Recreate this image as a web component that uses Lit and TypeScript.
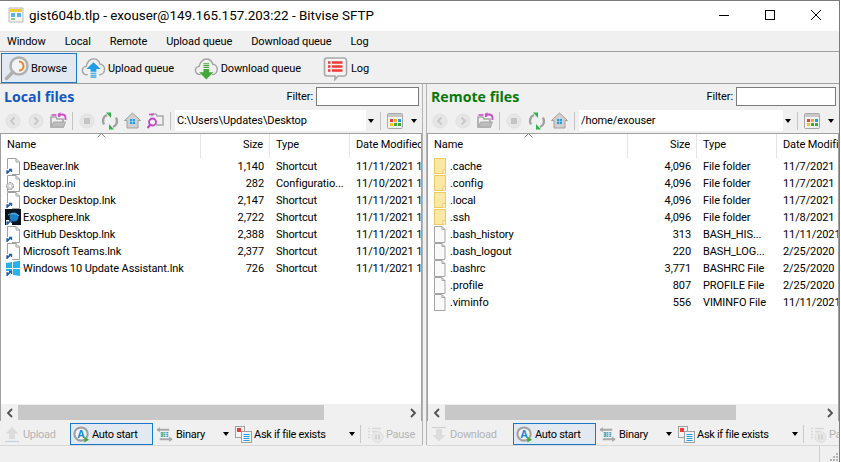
import { LitElement, css, html, svg } from 'lit';
import { customElement } from 'lit/decorators.js';

type Row = { name: string; size: string; type: string; date: string; icon: string };

const localRows: Row[] = [
  { name: 'DBeaver.lnk', size: '1,140', type: 'Shortcut', date: '11/11/2021 1', icon: 'link' },
  { name: 'desktop.ini', size: '282', type: 'Configuratio...', date: '11/10/2021 1', icon: 'ini' },
  { name: 'Docker Desktop.lnk', size: '2,147', type: 'Shortcut', date: '11/11/2021 1', icon: 'link' },
  { name: 'Exosphere.lnk', size: '2,722', type: 'Shortcut', date: '11/11/2021 1', icon: 'exo' },
  { name: 'GitHub Desktop.lnk', size: '2,388', type: 'Shortcut', date: '11/11/2021 1', icon: 'link' },
  { name: 'Microsoft Teams.lnk', size: '2,377', type: 'Shortcut', date: '11/10/2021 1', icon: 'link' },
  { name: 'Windows 10 Update Assistant.lnk', size: '726', type: 'Shortcut', date: '11/11/2021 1', icon: 'win' },
];

const remoteRows: Row[] = [
  { name: '.cache', size: '4,096', type: 'File folder', date: '11/7/2021', icon: 'folder' },
  { name: '.config', size: '4,096', type: 'File folder', date: '11/7/2021', icon: 'folder' },
  { name: '.local', size: '4,096', type: 'File folder', date: '11/7/2021', icon: 'folder' },
  { name: '.ssh', size: '4,096', type: 'File folder', date: '11/8/2021', icon: 'folder' },
  { name: '.bash_history', size: '313', type: 'BASH_HIS...', date: '11/11/2021', icon: 'file' },
  { name: '.bash_logout', size: '220', type: 'BASH_LOG...', date: '2/25/2020', icon: 'file' },
  { name: '.bashrc', size: '3,771', type: 'BASHRC File', date: '2/25/2020', icon: 'file' },
  { name: '.profile', size: '807', type: 'PROFILE File', date: '2/25/2020', icon: 'file' },
  { name: '.viminfo', size: '556', type: 'VIMINFO File', date: '11/11/2021', icon: 'file' },
];

const shortcutArrow = svg`<rect x="1" y="11" width="6" height="6" fill="#fff"/><path d="M2 16v-3h1.500M2.500 15l3-3M4 11.500h2.500V14" fill="none" stroke="#1f5fa8" stroke-width="1.300"/>`;

const pageShape = svg`<path d="M2.500 .5h8.500l3.500 3.500v12.500h-12z" fill="#fff" stroke="#a0a0a0"/><path d="M11 .5v3.500h3.500" fill="none" stroke="#a0a0a0"/>`;

function fileIcon(kind: string) {
  let body;
  if (kind === 'folder') {
    body = svg`<rect x="2.500" y=".5" width="11" height="15" fill="#fce8a6" stroke="#eecb62"/><path d="M11 15.500v-4h2.500v4" fill="#fdf2cc" stroke="#eecb62"/>`;
  } else if (kind === 'file') {
    body = svg`<path d="M2.500 .5h7.500l3 3v13h-10.500z" fill="#f9f9f9" stroke="#a4a4a4"/><path d="M10 .5v3h3" fill="none" stroke="#a4a4a4"/>`;
  } else if (kind === 'link') {
    body = svg`${pageShape}${shortcutArrow}`;
  } else if (kind === 'ini') {
    body = svg`${pageShape}<circle cx="5" cy="11" r="3.500" fill="#d4d4d4" stroke="#8e8e8e" stroke-dasharray="2 1"/><circle cx="5" cy="11" r="1.200" fill="#fff"/>`;
  } else if (kind === 'exo') {
    body = svg`<rect width="16" height="16" fill="#0d1420"/><circle cx="9" cy="8" r="4.500" fill="#1f7fc4"/><path d="M3 6c3-2 8-2 11 1" fill="none" stroke="#5cc0f0"/>${shortcutArrow}`;
  } else {
    body = svg`<path d="M1 3l6-1v6H1zM8 1.800L15 .8V8H8zM1 9h6v6l-6-1zM8 9h7v7l-7-1z" fill="#22b4ea"/>${shortcutArrow}`;
  }
  return html`<svg class="ficon" width="16" height="17" viewBox="0 0 16 17">${body}</svg>`;
}

const cloud = svg`<path d="M7 20c-3.500 0-5.500-2-5.500-4.500 0-2.500 2-4 4-4.200C6 7 9.500 3.500 13 3.500c3.500 0 6 2.300 6.800 5.500 2.700.2 4.700 2.500 4.700 5.200 0 3.200-2.300 5.800-5.500 5.800" fill="none" stroke="#a4a4a4" stroke-width="1.500"/>`;

const toolIcons = {
  browse: html`<svg width="25" height="25" viewBox="0 0 25 25"><circle cx="15" cy="10" r="8.500" fill="#f2f4f6" stroke="#b0b0b0" stroke-width="2.500"/><path d="M9 16l-6.500 6.500" stroke="#b0b0b0" stroke-width="3.500" stroke-linecap="round"/><path d="M15 5.500a4.500 4.500 0 0 1 0 9" fill="none" stroke="#f58220" stroke-width="2"/></svg>`,
  upload: html`<svg width="26" height="26" viewBox="0 0 26 26">${cloud}<path d="M13 7l7.500 7H16v3h-6v-3H5.500z" fill="#1c9fe8"/><path d="M10 18.500h6M10 20.500h6M10 22.500h6" stroke="#1c9fe8" stroke-width="1.200"/></svg>`,
  download: html`<svg width="26" height="26" viewBox="0 0 26 26">${cloud}<path d="M10 8.500h6M10 10.500h6M10 12.500h6" stroke="#44a838" stroke-width="1.200"/><path d="M10 14h6v3.500h4.500L13 25l-7.500-7.500H10z" fill="#44a838"/></svg>`,
  log: html`<svg width="25" height="25" viewBox="0 0 25 25"><path d="M4 2h17a2.500 2.500 0 0 1 2.500 2.500v13a2.500 2.500 0 0 1-2.500 2.500h-6l-3 3.500v-3.500H4a2.500 2.500 0 0 1-2.500-2.500v-13A2.500 2.500 0 0 1 4 2z" fill="#f4f4f4" stroke="#a8a8a8" stroke-width="1.600"/><path d="M9 6.500h10.500M9 10.500h10.500M9 14.500h10.500M5 6.500h2.500M5 10.500h2.500M5 14.500h2.500" stroke="#ee3b34" stroke-width="2.400"/></svg>`,
};

const navIcons = {
  back: html`<svg width="16" height="16" viewBox="0 0 16 16"><circle cx="8" cy="8" r="7" fill="#e6e6e6" stroke="#e0e0e0"/><path d="M9.500 4.500L6 8l3.500 3.500" fill="none" stroke="#c8c8c8" stroke-width="2"/></svg>`,
  forward: html`<svg width="16" height="16" viewBox="0 0 16 16"><circle cx="8" cy="8" r="7" fill="#e6e6e6" stroke="#e0e0e0"/><path d="M6.500 4.500L10 8l-3.500 3.500" fill="none" stroke="#c8c8c8" stroke-width="2"/></svg>`,
  up: html`<svg width="17" height="17" viewBox="0 0 17 17"><path d="M1 15V5h5l1 2h6v8z" fill="none" stroke="#a8a8a8" stroke-width="1.700"/><path d="M1.500 15l2-5h12l-2 5z" fill="#bdbdbd" stroke="#a8a8a8"/><path d="M1.500 3h5" stroke="#c850c8" stroke-width="1.600"/><path d="M8 4h1V2.500h3c2.500 0 3.500 1.500 3.500 3.500v2" fill="none" stroke="#c850c8" stroke-width="1.800"/><path d="M10.500 .2v4.600L7.500 2.500z" fill="#c850c8"/></svg>`,
  stop: html`<svg width="16" height="16" viewBox="0 0 16 16"><circle cx="8" cy="8" r="7" fill="#e6e6e6" stroke="#e0e0e0"/><rect x="5" y="5" width="6" height="6" fill="#c4c4c4"/></svg>`,
  refresh: html`<svg width="18" height="18" viewBox="0 0 18 18"><path d="M3 12.500C1 9 2 4.500 6 3" fill="none" stroke="#a0a0a0" stroke-width="2.400"/><path d="M15 5.500C17 9 16 13.500 12 15" fill="none" stroke="#a0a0a0" stroke-width="2.400"/><path d="M5 .5h5v5.500z M13 17.500H8v-5.500z" fill="#2fb24a"/></svg>`,
  home: html`<svg width="17" height="17" viewBox="0 0 17 17"><path d="M8.500 1L.5 8.500h2.500V16h11V8.500h2.500z" fill="#d0d0d0" stroke="#a0a0a0"/><rect x="6" y="7" width="5" height="5" fill="#1c9fe8"/><path d="M8.500 7v5M6 9.500h5" stroke="#bfe6fa" stroke-width=".6"/></svg>`,
  find: html`<svg width="17" height="17" viewBox="0 0 17 17"><path d="M5 4V2h4l1 2h6v9H9" fill="none" stroke="#a8a8a8" stroke-width="1.500"/><path d="M2 2.500h5" stroke="#c850c8" stroke-width="1.600"/><circle cx="5.500" cy="10" r="3.500" fill="#f4f4f4" stroke="#c040c8" stroke-width="1.800"/><path d="M3 13l-2.500 3" stroke="#c040c8" stroke-width="2"/></svg>`,
  view: html`<svg width="16" height="16" viewBox="0 0 16 16"><rect x=".5" y=".5" width="15" height="15" rx="1" fill="#f4f4f4" stroke="#a8a8a8"/><rect x="1" y="1" width="14" height="3" fill="#c8c8c8"/><rect x="3" y="6" width="3" height="3" fill="#ee3b34"/><rect x="7" y="6" width="3" height="3" fill="#f5a623"/><rect x="11" y="6" width="3" height="3" fill="#1c9fe8"/><rect x="3" y="10" width="3" height="3" fill="#f5c623"/><rect x="7" y="10" width="3" height="3" fill="#44a838"/><rect x="11" y="10" width="3" height="3" fill="#44a838"/></svg>`,
};

const queueIcons = {
  upload: html`<svg width="16" height="17" viewBox="0 0 16 17"><path d="M8 1l6.500 6.500H11V13H5V7.500H1.500z" fill="#dcdcdc"/><path d="M1 15.500h14" stroke="#c4d0dc" stroke-width="1.200"/></svg>`,
  download: html`<svg width="16" height="17" viewBox="0 0 16 17"><path d="M1 1.500h14" stroke="#d0d0d0" stroke-width="1.200"/><path d="M5 3h6v6h3.500L8 15.500 1.500 9H5z" fill="#dcdcdc"/></svg>`,
  auto: html`<svg width="17" height="17" viewBox="0 0 18 18"><circle cx="8.500" cy="8.500" r="7" fill="#f4f4f4" stroke="#a0a0a0" stroke-width="2.200"/><text x="8.500" y="12.500" text-anchor="middle" class="auto-a">A</text><path d="M12 11.500l5 3-5 3z" fill="#44a838"/></svg>`,
  binary: html`<svg width="17" height="17" viewBox="0 0 18 17"><path d="M1 3.500h13M4 13.500h13" stroke="#a8a8a8" stroke-width="2"/><path d="M4 .5v6L1 3.500zM14 10.500v6l3.500-3z" fill="#a8a8a8"/><path d="M5 6.500h8M5 8.500h8M5 10.500h8" stroke="#4aa0c8" stroke-width="1.500" stroke-dasharray="2 1"/><path d="M7 6v5" stroke="#5cb85c" stroke-width="1.400"/></svg>`,
  exists: html`<svg width="17" height="17" viewBox="0 0 17 17"><rect x=".5" y=".5" width="9" height="11" fill="#f4f4f4" stroke="#a0a0a0"/><rect x="2" y="2" width="4" height="4" fill="#ee3b34"/><rect x="6.500" y="5.500" width="10" height="11" fill="#f4f4f4" stroke="#a0a0a0"/><path d="M8.500 8.500h6M8.500 10.500h6M8.500 12.500h6M8.500 14.500h6" stroke="#1c9fe8" stroke-width="1.200"/></svg>`,
  pause: html`<svg width="17" height="17" viewBox="0 0 17 17"><path d="M1 2.500h2M5 2.500h9M1 5.500h2M5 5.500h5M1 8.500h2M1 11.500h2" stroke="#d8d8d8" stroke-width="1.400"/><circle cx="10.500" cy="11" r="5.500" fill="#e8e8e8" stroke="#dedede"/><path d="M9 8.500v5M12 8.500v5" stroke="#cfcfcf" stroke-width="1.600"/></svg>`,
};

@customElement('app-root')
class AppRoot extends LitElement {
  static styles = css`
    :host {
      display: block;
      width: 841px;
      height: 462px;
      overflow: hidden;
      font-family: Roboto, sans-serif;
      font-size: 11px;
      letter-spacing: -0.1px;
      color: #000;
      background-color: #fff;
    }

    .window {
      display: flex;
      flex-direction: column;
      width: 840px;
      height: 462px;
      box-sizing: border-box;
      border-top: 1px solid #7a7a7a;
      border-right: 1px solid #7a7a7a;
      background-color: #f0f0f0;
      white-space: nowrap;
    }

    .titlebar {
      display: flex;
      align-items: center;
      height: 30px;
      flex: none;
      box-sizing: border-box;
      padding: 0 0 2px 8px;
      gap: 5px;
      background-color: #fff;
      font-size: 13.4px;
      letter-spacing: 0;
    }

    .title-text {
      flex-grow: 1;
    }

    .caption {
      display: flex;
    }

    .caption svg {
      display: block;
      width: 46px;
      height: 28px;
    }

    .menubar {
      display: flex;
      align-items: center;
      height: 20px;
      flex: none;
      padding-left: 7px;
      gap: 19px;
      border-bottom: 1px solid #a0a0a0;
    }

    .toolbar {
      display: flex;
      align-items: flex-end;
      height: 31px;
      flex: none;
      padding-left: 1px;
      box-sizing: content-box;
      border-bottom: 1px solid #a0a0a0;
    }

    .tool {
      display: flex;
      align-items: center;
      flex: none;
      height: 30px;
      box-sizing: border-box;
      gap: 2px;
      margin-left: 20px;
    }

    .tool.active {
      width: 76px;
      margin-left: 0;
      padding-left: 2px;
      background-color: #e3e9f0;
      border: 1px solid #1a78c8;
    }

    .tool.upload {
      width: 93px;
      margin-left: 4px;
    }

    .tool.download {
      width: 107px;
    }

    .tool.log {
      margin-left: 22px;
      gap: 3px;
    }

    .panes {
      display: flex;
      flex: none;
      height: 362px;
    }

    .pane {
      display: flex;
      flex-direction: column;
      flex: none;
      box-sizing: border-box;
    }

    .pane.local {
      width: 422px;
    }

    .pane.remote {
      width: 412px;
    }

    .splitter {
      width: 5px;
      flex: none;
      box-sizing: border-box;
      height: 361px;
      border-left: 1px solid #b4b4b4;
      border-right: 1px solid #b4b4b4;
    }

    .pane-head {
      display: flex;
      align-items: center;
      justify-content: space-between;
      height: 26px;
      flex: none;
      padding: 0 3px 2px 4px;
      box-sizing: border-box;
    }

    .pane-title {
      font-family: "Open Sans", sans-serif;
      font-size: 14.2px;
      font-weight: 700;
      letter-spacing: 0;
    }

    .local .pane-title {
      color: #1258c0;
    }

    .remote .pane-title {
      color: #087808;
    }

    .filter {
      display: flex;
      align-items: center;
      gap: 3px;
    }

    .filter-box {
      height: 19px;
      background-color: #fff;
      border: 1px solid #7a7a7a;
      box-sizing: border-box;
    }

    .local .filter-box {
      width: 103px;
    }

    .remote .filter-box {
      width: 100px;
    }

    .nav {
      display: flex;
      align-items: center;
      height: 23px;
      flex: none;
      padding: 0 0 2px 1px;
      box-sizing: border-box;
    }

    .nav-icon {
      display: flex;
      align-items: center;
      justify-content: center;
      width: 23px;
    }

    .divider {
      width: 1px;
      height: 18px;
      margin: 0 2px;
      background-color: #c4c4c4;
      flex: none;
    }

    .divider.wide {
      margin-left: 3px;
    }

    .path {
      display: flex;
      align-items: center;
      justify-content: space-between;
      height: 21px;
      margin: 0 2px;
      padding-left: 2px;
      box-sizing: border-box;
      background-color: #fff;
      flex: none;
    }

    .local .path {
      width: 201px;
    }

    .remote .path {
      width: 214px;
    }

    .path-drop {
      display: flex;
      align-items: center;
      justify-content: center;
      width: 10px;
      height: 21px;
      background-color: #f0f0f0;
    }

    .caret {
      width: 0;
      height: 0;
      flex: none;
      border-left: 3.5px solid transparent;
      border-right: 3.5px solid transparent;
      border-top: 4px solid #000;
    }

    .view {
      display: flex;
      align-items: center;
      gap: 8px;
      margin-left: 4px;
    }

    .list {
      display: flex;
      flex-direction: column;
      flex-grow: 1;
      min-height: 0;
      position: relative;
      background-color: #fff;
      border: 1px solid #a0a0a0;
      border-bottom: none;
    }

    .grid-head,
    .grid-row {
      display: grid;
    }

    .local .grid-head,
    .local .grid-row {
      grid-template-columns: 200px 69px 80px 71px;
    }

    .remote .grid-head,
    .remote .grid-row {
      grid-template-columns: 200px 69px 80px 61px;
    }

    .grid-head {
      height: 24px;
      flex: none;
      align-items: stretch;
    }

    .col {
      display: flex;
      align-items: center;
      padding: 0 6px 3px;
      overflow: hidden;
      border-right: 1px solid #e5e5e5;
    }

    .col.last {
      border-right: none;
    }

    .col.right {
      justify-content: flex-end;
    }

    .sort {
      position: absolute;
      left: 96px;
      top: -1px;
    }

    .rows {
      flex-grow: 1;
      min-height: 0;
    }

    .grid-row {
      height: 17px;
      align-items: center;
    }

    .cell {
      padding: 0 6px;
      overflow: hidden;
    }

    .cell.right {
      text-align: right;
    }

    .cell.name {
      display: flex;
      align-items: center;
      gap: 2px;
      padding: 0 0 0 4px;
    }

    .ficon {
      flex: none;
    }

    .scrollbar {
      display: flex;
      align-items: center;
      height: 17px;
      flex: none;
      background-color: #f0f0f0;
    }

    .arrow {
      display: flex;
      align-items: center;
      justify-content: center;
      width: 17px;
      height: 17px;
      flex: none;
    }

    .thumb {
      height: 15px;
      background-color: #c8c8c8;
      flex: none;
    }

    .track {
      flex-grow: 1;
    }

    .queue {
      display: flex;
      align-items: center;
      height: 25px;
      flex: none;
      overflow: hidden;
      padding: 2px 0 0 3px;
      box-sizing: border-box;
      border-bottom: 1px solid #d8d8d8;
      letter-spacing: -0.3px;
    }

    .q-item {
      display: flex;
      align-items: center;
      flex: none;
      gap: 3px;
      height: 22px;
      box-sizing: border-box;
    }

    .q-item.off {
      color: #b4b4b4;
    }

    .q-start {
      width: 67px;
      padding-left: 1px;
    }

    .remote .q-start {
      width: 83px;
    }

    .q-auto {
      width: 83px;
      padding-left: 2px;
      gap: 2px;
      background-color: #e3e9f0;
      border: 1px solid #1a78c8;
    }

    .q-binary {
      width: 76px;
      margin-left: 3px;
    }

    .q-exists {
      width: 120px;
      margin-left: 3px;
      gap: 2px;
    }

    .q-binary .caret {
      margin-left: auto;
      margin-right: 3px;
    }

    .q-exists .caret {
      margin-left: auto;
    }

    .q-sep {
      width: 1px;
      height: 18px;
      margin: 0 6px 0 5px;
      background-color: #c8c8c8;
      flex: none;
    }

    .q-pause {
      gap: 2px;
    }

    .statusbar {
      display: flex;
      justify-content: flex-end;
      flex-grow: 1;
      min-height: 0;
    }

    .grip-cell {
      display: flex;
      align-items: flex-end;
      justify-content: flex-end;
      width: 20px;
      box-sizing: border-box;
      border-left: 1px solid #d0d0d0;
    }

    .auto-a {
      font-family: "Open Sans", sans-serif;
      font-size: 11px;
      font-weight: 700;
      fill: #1c88dc;
    }
  `;

  renderPane(side: string, title: string, path: string, rows: Row[], thumbW: number) {
    const remote = side === 'remote';
    return html`
      <section class="pane ${side}">
        <div class="pane-head">
          <span class="pane-title">${title}</span>
          <span class="filter">Filter:<span class="filter-box"></span></span>
        </div>
        <div class="nav">
          <span class="nav-icon">${navIcons.back}</span>
          <span class="nav-icon">${navIcons.forward}</span>
          <span class="nav-icon">${navIcons.up}</span>
          <span class="divider"></span>
          <span class="nav-icon">${navIcons.stop}</span>
          <span class="nav-icon">${navIcons.refresh}</span>
          <span class="nav-icon">${navIcons.home}</span>
          ${remote ? '' : html`<span class="nav-icon">${navIcons.find}</span>`}
          <span class="divider wide"></span>
          <div class="path">
            <span>${path}</span>
            <span class="path-drop"><span class="caret"></span></span>
          </div>
          <span class="divider"></span>
          <span class="view">${navIcons.view}<span class="caret"></span></span>
        </div>
        <div class="list">
          <svg class="sort" width="9" height="5" viewBox="0 0 9 5"><path d="M.5 4.500l4-4 4 4" fill="none" stroke="#8a8a8a"/></svg>
          <div class="grid-head">
            <span class="col">Name</span>
            <span class="col right">Size</span>
            <span class="col">Type</span>
            <span class="col last">Date Modified</span>
          </div>
          <div class="rows">
            ${rows.map(
              (r) => html`
                <div class="grid-row">
                  <span class="cell name">${fileIcon(r.icon)}<span>${r.name}</span></span>
                  <span class="cell right">${r.size}</span>
                  <span class="cell">${r.type}</span>
                  <span class="cell">${r.date}</span>
                </div>
              `,
            )}
          </div>
          <div class="scrollbar">
            <span class="arrow"><svg width="8" height="10" viewBox="0 0 8 10"><path d="M6 1L2 5l4 4" fill="none" stroke="#505050" stroke-width="1.800"/></svg></span>
            <span class="thumb" style="width:${thumbW}px"></span>
            <span class="track"></span>
            <span class="arrow"><svg width="8" height="10" viewBox="0 0 8 10"><path d="M2 1l4 4-4 4" fill="none" stroke="#505050" stroke-width="1.800"/></svg></span>
          </div>
        </div>
        <div class="queue">
          <span class="q-item off q-start">${remote ? queueIcons.download : queueIcons.upload}${remote ? 'Download' : 'Upload'}</span>
          <span class="q-item q-auto">${queueIcons.auto}Auto start</span>
          <span class="q-item q-binary">${queueIcons.binary}Binary<span class="caret"></span></span>
          <span class="q-item q-exists">${queueIcons.exists}Ask if file exists<span class="caret"></span></span>
          <span class="q-sep"></span>
          <span class="q-item off q-pause">${queueIcons.pause}Pause</span>
        </div>
      </section>
    `;
  }

  render() {
    return html`
      <div class="window">
        <header class="titlebar">
          <svg width="16" height="16" viewBox="0 0 16 16">
            <path d="M1 1h14v14H1z" fill="#f6f6f6" stroke="#b8b8b8"/>
            <path d="M2 2h12v3H2z" fill="#f5c842"/>
            <path d="M3 7h4M3 9h4M9 7h4M9 9h4" stroke="#1c9fe8" stroke-width="1.400"/>
            <path d="M3 12h4" stroke="#5cb85c" stroke-width="1.400"/>
          </svg>
          <span class="title-text">gist604b.tlp - exouser@149.165.157.203:22 - Bitvise SFTP</span>
          <div class="caption">
            <svg viewBox="0 0 46 28"><path d="M18 14.500h10" stroke="#000"/></svg>
            <svg viewBox="0 0 46 28"><rect x="18.500" y="9.500" width="9" height="9" fill="none" stroke="#000"/></svg>
            <svg viewBox="0 0 46 28"><path d="M18 9l10 10M28 9L18 19" stroke="#000"/></svg>
          </div>
        </header>
        <nav class="menubar">
          <span>Window</span><span>Local</span><span>Remote</span><span>Upload queue</span><span>Download queue</span><span>Log</span>
        </nav>
        <div class="toolbar">
          <span class="tool active">${toolIcons.browse}Browse</span>
          <span class="tool upload">${toolIcons.upload}Upload queue</span>
          <span class="tool download">${toolIcons.download}Download queue</span>
          <span class="tool log">${toolIcons.log}Log</span>
        </div>
        <div class="panes">
          ${this.renderPane('local', 'Local files', 'C:\\Users\\Updates\\Desktop', localRows, 306)}
          <div class="splitter"></div>
          ${this.renderPane('remote', 'Remote files', '/home/exouser', remoteRows, 291)}
        </div>
        <div class="statusbar">
          <div class="grip-cell">
            <svg width="10" height="10" viewBox="0 0 10 10"><path d="M7 1h2v2H7zM4 4h2v2H4zM7 4h2v2H7zM1 7h2v2H1zM4 7h2v2H4zM7 7h2v2H7z" fill="#b4b4b4"/></svg>
          </div>
        </div>
      </div>
    `;
  }
}

export default AppRoot;
